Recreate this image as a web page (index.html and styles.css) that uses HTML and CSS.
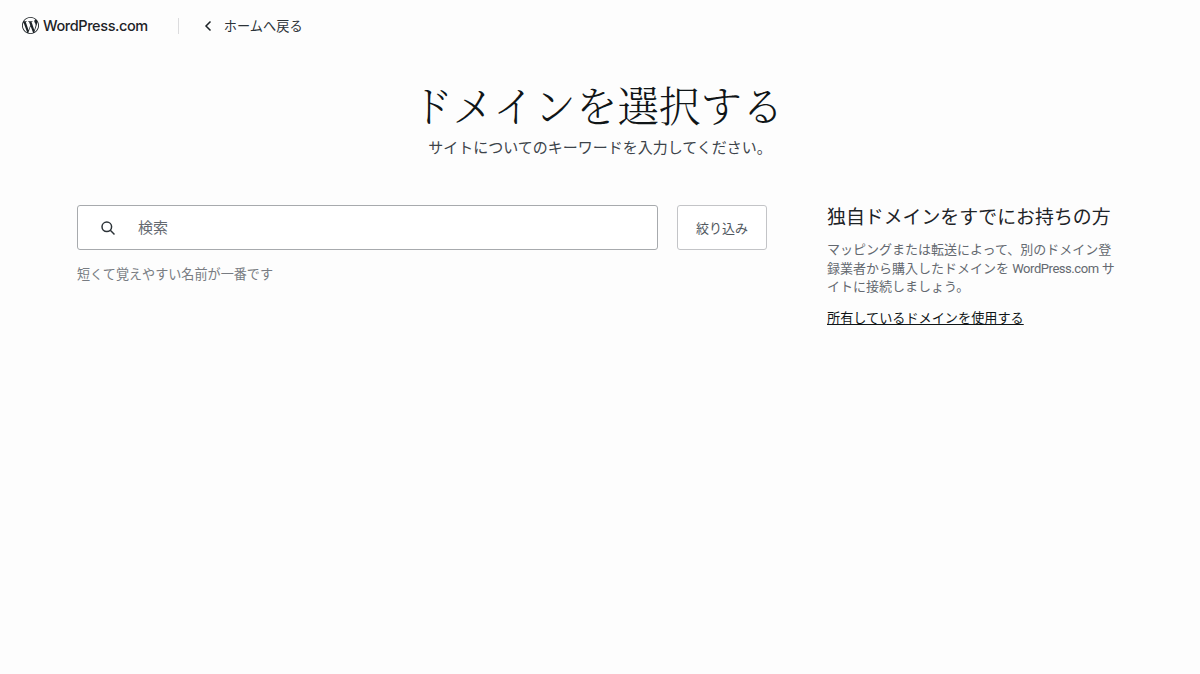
FILE: index.html
```html
<!DOCTYPE html>
<html lang="ja">
<head>
    <meta charset="UTF-8">
    <title>ドメインを選択する</title>
    <link rel="stylesheet" href="styles.css">
</head>
<body>
    <header class="topbar">
        <a class="brand" href="#">
            <svg class="brand-logo" viewBox="0 0 24 24" width="17" height="17"><path d="M21.469 6.825c.84 1.537 1.318 3.3 1.318 5.175 0 3.979-2.156 7.456-5.363 9.325l3.295-9.527c.615-1.54.82-2.771.82-3.864 0-.405-.026-.78-.07-1.11m-7.981.105c.647-.03 1.232-.105 1.232-.105.582-.075.514-.93-.067-.899 0 0-1.755.135-2.88.135-1.064 0-2.85-.15-2.85-.15-.585-.03-.661.855-.075.885 0 0 .54.061 1.125.09l1.68 4.605-2.37 7.08L5.354 6.9c.649-.03 1.234-.1 1.234-.1.585-.075.516-.93-.065-.896 0 0-1.746.138-2.874.138-.2 0-.438-.008-.69-.015C4.911 3.15 8.235 1.215 12 1.215c2.809 0 5.365 1.072 7.286 2.833-.046-.003-.091-.009-.141-.009-1.06 0-1.812.923-1.812 1.914 0 .89.513 1.643 1.06 2.531.411.72.89 1.643.89 2.977 0 .915-.354 1.994-.821 3.479l-1.075 3.585-3.9-11.61.001.014zM12 22.784c-1.059 0-2.081-.153-3.048-.437l3.237-9.406 3.315 9.087c.024.053.05.101.078.149-1.12.393-2.325.609-3.582.609M1.211 12c0-1.564.336-3.05.935-4.39L7.29 21.709C3.694 19.96 1.212 16.271 1.211 12M12 0C5.385 0 0 5.385 0 12s5.385 12 12 12 12-5.385 12-12S18.615 0 12 0"/></svg>
            <span class="brand-name">WordPress.com</span>
        </a>
        <span class="divider"></span>
        <a class="back" href="#">
            <svg class="back-icon" viewBox="0 0 10 12" width="10" height="12"><path d="M7.5 1.5 3 6l4.5 4.5" fill="none" stroke="#1d2327" stroke-width="1.5"/></svg>
            <span>ホームへ戻る</span>
        </a>
    </header>

    <section class="intro">
        <h1>ドメインを選択する</h1>
        <p>サイトについてのキーワードを入力してください。</p>
    </section>

    <main class="content">
        <div class="search-col">
            <div class="search-row">
                <div class="search-box">
                    <svg class="search-icon" viewBox="0 0 16 16" width="16" height="16"><circle cx="6.8" cy="6.8" r="4.8" fill="none" stroke="#2c3338" stroke-width="1.5"/><path d="m10.3 10.3 4.2 4.2" stroke="#2c3338" stroke-width="1.5"/></svg>
                    <span class="search-placeholder">検索</span>
                </div>
                <button class="filter-btn">絞り込み</button>
            </div>
            <p class="hint">短くて覚えやすい名前が一番です</p>
        </div>
        <aside class="own-domain">
            <h2>独自ドメインをすでにお持ちの方</h2>
            <p>マッピングまたは転送によって、別のドメイン登録業者から購入したドメインを <span class="latin">WordPress.com</span> サイトに接続しましょう。</p>
            <a href="#">所有しているドメインを使用する</a>
        </aside>
    </main>
</body>
</html>
```

FILE: styles.css
```css
body {
    margin: 0;
    background: #fdfdfd;
    color: #1d2327;
    font-family: Roboto, "Noto Sans CJK JP", sans-serif;
}
.topbar {
    display: flex;
    align-items: center;
    height: 51px;
    padding-left: 22px;
}
.brand {
    display: flex;
    align-items: center;
    gap: 4px;
    color: #1d2327;
    text-decoration: none;
}
.brand-logo {
    fill: #1d2327;
}
.brand-name {
    font-family: Inter, sans-serif;
    font-size: 14.5px;
    font-weight: 500;
    letter-spacing: -0.4px;
}
.divider {
    width: 1px;
    height: 16px;
    margin: 0 20px 0 30px;
    background: #dcdcde;
}
.back {
    display: flex;
    align-items: center;
    gap: 11px;
    padding-left: 4px;
    color: #2c3338;
    font-size: 13.2px;
    text-decoration: none;
}
.intro {
    text-align: center;
}
h1 {
    margin: 23px 0 0;
    padding-right: 5px;
    color: #101517;
    font-family: "Noto Serif CJK JP", "Liberation Serif", "Noto Sans CJK JP", serif;
    font-size: 41.5px;
    font-weight: 300;
    line-height: 60px;
}
.intro p {
    margin: 3px 0 0;
    color: #3c434a;
    font-size: 15px;
    line-height: 22px;
}
.content {
    display: flex;
    gap: 60px;
    width: 1046px;
    margin: 46px auto 0;
}
.search-col {
    width: 690px;
}
.search-row {
    display: flex;
    gap: 19px;
}
.search-box {
    display: flex;
    flex: 1;
    align-items: center;
    gap: 22px;
    box-sizing: border-box;
    height: 45px;
    padding-left: 22px;
    background: #fff;
    border: 1px solid #a7aaad;
    border-radius: 3px;
}
.search-placeholder {
    color: #646970;
    font-size: 15px;
    line-height: 20px;
}
.filter-btn {
    box-sizing: border-box;
    width: 90px;
    height: 45px;
    padding: 0;
    background: #fff;
    border: 1px solid #c3c4c7;
    border-radius: 3px;
    color: #50575e;
    font-family: inherit;
    font-size: 13px;
}
.hint {
    margin: 16px 0 0;
    color: #787c82;
    font-size: 13.1px;
    line-height: 18px;
}
.own-domain {
    flex: 1;
}
.own-domain h2 {
    margin: 0;
    color: #1d2327;
    font-size: 18.9px;
    font-weight: 400;
    line-height: 26px;
}
.own-domain p {
    margin: 10px 0 0;
    color: #646970;
    font-size: 13px;
    line-height: 18.7px;
}
.latin {
    letter-spacing: -0.45px;
}
.own-domain a {
    display: inline-block;
    margin-top: 13px;
    color: #101517;
    font-size: 13.15px;
    line-height: 18px;
}
```
